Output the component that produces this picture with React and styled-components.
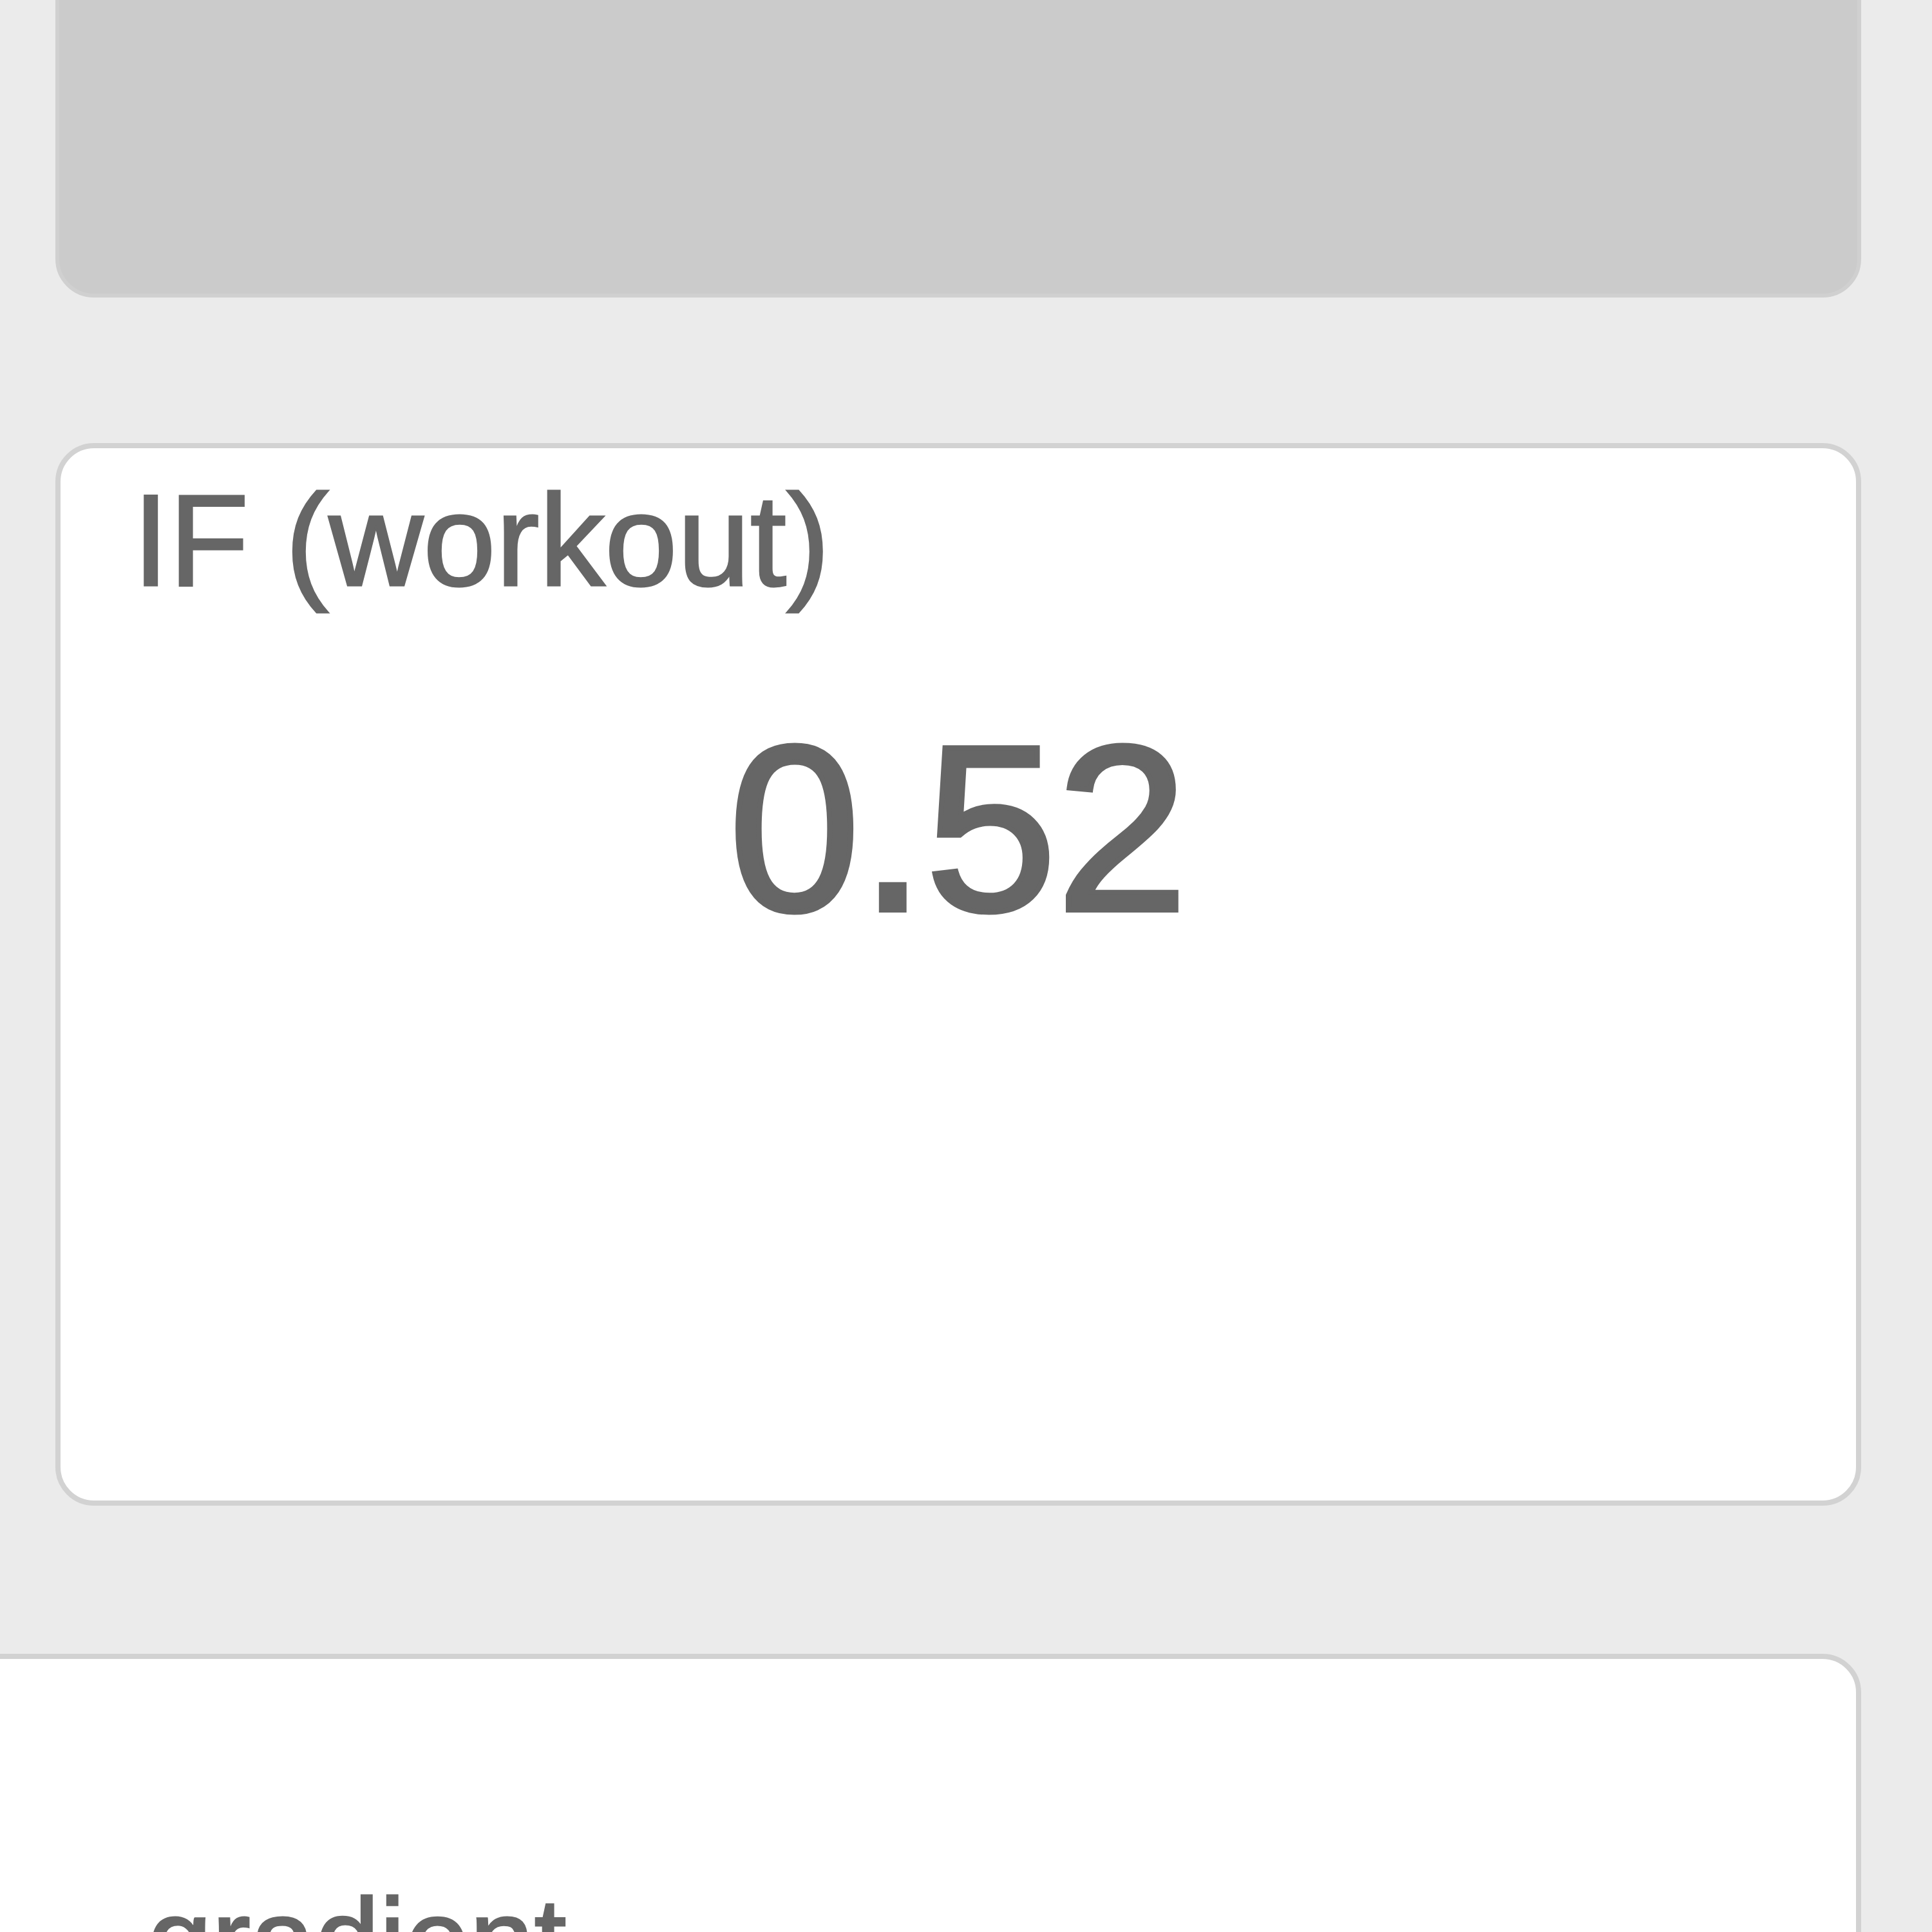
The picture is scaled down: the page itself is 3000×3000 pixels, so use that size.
import styled, { createGlobalStyle } from "styled-components";

const GlobalStyle = createGlobalStyle`
  html, body {
    margin: 0;
    padding: 0;
    background: #ebebeb;
    overflow: hidden;
  }
  body {
    font-family: "Liberation Sans", Arial, Helvetica, sans-serif;
    color: #666666;
  }
`;

const Page = styled.div`
  width: 3000px;
  height: 3000px;
  box-sizing: border-box;
  padding: 0 110px 0 86px;
  display: flex;
  flex-direction: column;
  overflow: hidden;
`;

const ChartPanel = styled.div`
  flex: none;
  height: 560px;
  margin-top: -98px;
  box-sizing: border-box;
  background: #cbcbcb;
  border: 6px solid #d0d0d0;
  border-radius: 60px;
`;

const Card = styled.div`
  flex: none;
  box-sizing: border-box;
  background: #ffffff;
  border: 8px solid #d2d2d2;
  border-radius: 60px;
  margin-top: ${(p) => p.$gap}px;
  margin-left: ${(p) => p.$shift || 0}px;
  height: ${(p) => p.$height}px;
  padding: ${(p) => p.$padTop}px 0 0 0;
`;

const Label = styled.div`
  font-size: ${(p) => p.$size || 203}px;
  line-height: normal;
  padding-left: ${(p) => p.$indent}px;
  white-space: nowrap;
  -webkit-text-stroke: 3px #666666;
`;

const Value = styled.div`
  margin-top: 120px;
  font-size: 366px;
  line-height: normal;
  text-align: center;
  -webkit-text-stroke: 8px #666666;
`;

const App = () => {
  return (
    <>
      <GlobalStyle />
      <Page>
        <ChartPanel />
        <Card $gap={226} $height={1650} $padTop={26}>
          <Label $indent={112}>IF (workout)</Label>
          <Value>0.52</Value>
        </Card>
        <Card $gap={230} $shift={-150} $height={1000} $padTop={332}>
          <Label $indent={285} $size={180}>gradient</Label>
        </Card>
      </Page>
    </>
  );
};

export default App;
